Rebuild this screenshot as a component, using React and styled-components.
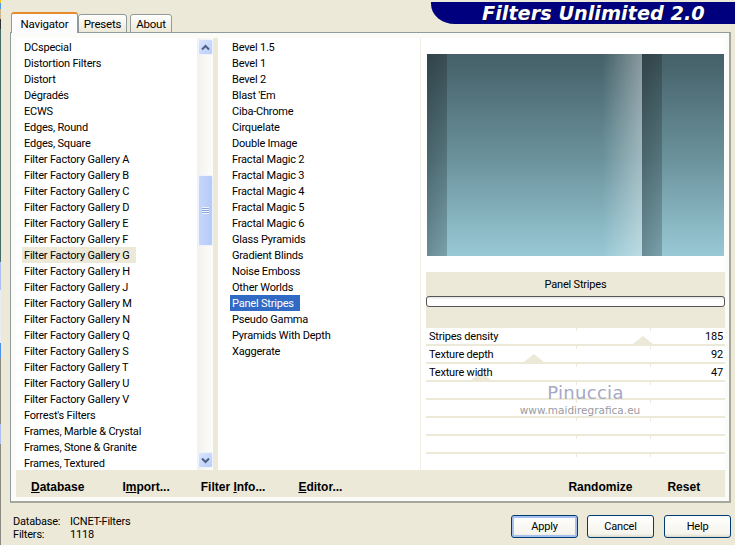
import React from "react";
import styled, { createGlobalStyle } from "styled-components";

const GlobalStyle = createGlobalStyle`
  html, body {
    margin: 0;
    padding: 0;
    background: #ece9d8;
  }
  body {
    font-family: Roboto, "Liberation Sans", sans-serif;
    font-size: 11px;
    letter-spacing: -0.2px;
    color: #000;
  }
`;

const filters = [
  "DCspecial", "Distortion Filters", "Distort", "Dégradés", "ECWS", "Edges, Round", "Edges, Square",
  "Filter Factory Gallery A", "Filter Factory Gallery B", "Filter Factory Gallery C", "Filter Factory Gallery D",
  "Filter Factory Gallery E", "Filter Factory Gallery F", "Filter Factory Gallery G", "Filter Factory Gallery H",
  "Filter Factory Gallery J", "Filter Factory Gallery M", "Filter Factory Gallery N", "Filter Factory Gallery Q",
  "Filter Factory Gallery S", "Filter Factory Gallery T", "Filter Factory Gallery U", "Filter Factory Gallery V",
  "Forrest's Filters", "Frames, Marble & Crystal", "Frames, Stone & Granite", "Frames, Textured",
];

const effects = [
  "Bevel 1.5", "Bevel 1", "Bevel 2", "Blast 'Em", "Ciba-Chrome", "Cirquelate", "Double Image",
  "Fractal Magic 2", "Fractal Magic 3", "Fractal Magic 4", "Fractal Magic 5", "Fractal Magic 6",
  "Glass Pyramids", "Gradient Blinds", "Noise Emboss", "Other Worlds", "Panel Stripes", "Pseudo Gamma",
  "Pyramids With Depth", "Xaggerate",
];

const sliders = [
  { label: "Stripes density", value: 185 },
  { label: "Texture depth", value: 92 },
  { label: "Texture width", value: 47 },
  {}, {}, {}, {}, {},
];

const Window = styled.div`
  width: 735px;
  height: 545px;
  overflow: hidden;
  display: flex;
  flex-direction: column;
  background: #ece9d8;
  box-sizing: border-box;
  border-left: 1px solid;
  border-image: linear-gradient(
      #f5c518 0 4px,
      #4a9be8 4px 10px,
      #c9b48c 10px 20px,
      #333 20px 30px,
      #46696a 30px 262px,
      #a9c0f0 262px 290px,
      #e8ecf6 290px 343px,
      #4a90e8 343px 358px,
      #8a8a80 358px 423px,
      #a9c0f0 423px 443px,
      #8a8a80 443px
    ) 1;
`;

const Header = styled.header`
  height: 32px;
  display: flex;
  padding-left: 10px;
`;

const Tabs = styled.nav`
  display: flex;
  align-items: flex-end;
  position: relative;
  top: 1px;
`;

const Tab = styled.div`
  box-sizing: border-box;
  width: ${(p) => p.$w}px;
  height: ${(p) => (p.$active ? 21 : 19)}px;
  margin-right: ${(p) => p.$gap || 0}px;
  display: flex;
  align-items: center;
  justify-content: center;
  font-size: 11.5px;
  border: 1px solid #919b9c;
  border-bottom: ${(p) => (p.$active ? "none" : "1px solid #919b9c")};
  border-top: ${(p) => (p.$active ? "2px solid #e68b2c" : "1px solid #919b9c")};
  border-radius: 3px 3px 0 0;
  background: ${(p) => (p.$active ? "#fcfcfe" : "linear-gradient(#fff, #ece9d8)")};
  z-index: ${(p) => (p.$active ? 1 : 0)};
`;

const Banner = styled.div`
  margin: 2px 0 0 auto;
  width: 304px;
  height: 22px;
  background: #00007f;
  border-bottom-left-radius: 24px 20px;
  box-sizing: border-box;
  padding-left: 51px;
  display: flex;
  align-items: center;
  color: #fff;
  font-family: "DejaVu Sans", sans-serif;
  font-weight: 700;
  font-style: italic;
  font-size: 19.3px;
  letter-spacing: 0;
  white-space: nowrap;
  text-shadow: 1px 1px 0 #000040;
`;

const Panel = styled.main`
  box-sizing: border-box;
  margin-left: 9px;
  width: 721px;
  height: 471px;
  padding: 5px 4px 4px 5px;
  border: 1px solid #919b9c;
  border-right: 2px solid #a5a89a;
  border-bottom: 2px solid #a5a89a;
  background: #fbfbf7;
  display: flex;
  flex-direction: column;
`;

const Columns = styled.div`
  height: 432px;
  display: flex;
`;

const ListPane = styled.div`
  width: ${(p) => p.$w}px;
  height: 432px;
  overflow: hidden;
  box-sizing: border-box;
  padding: 1px 0 0 ${(p) => p.$indent}px;
  background: #fff;
  flex: none;
`;

const Item = styled.div`
  height: 16px;
  line-height: 16px;
  white-space: nowrap;
`;

const ItemLabel = styled.span`
  display: inline-block;
  height: 16px;
  line-height: 18px;
  padding: 0 6px 0 2px;
  color: ${(p) => (p.$selected ? "#fff" : "#000")};
  background: ${(p) => (p.$selected ? "#316ac5" : p.$current ? "#ece9d8" : "transparent")};
`;

const Scrollbar = styled.div`
  width: 16px;
  height: 432px;
  flex: none;
  box-sizing: border-box;
  padding: 1px;
  background: linear-gradient(90deg, #f3f1ec, #fdfdfa);
  display: flex;
  flex-direction: column;
  align-items: center;
`;

const ScrollButton = styled.div`
  width: 15px;
  height: 16px;
  flex: none;
  border-radius: 2px;
  border: 1px solid #eef4fe;
  box-sizing: border-box;
  background: linear-gradient(135deg, #dbe6fd, #b9cdf9);
  display: flex;
  align-items: center;
  justify-content: center;
`;

const ScrollThumb = styled.div`
  width: 15px;
  height: 71px;
  flex: none;
  margin: 120px 0 206px;
  box-sizing: border-box;
  border: 1px solid #eef4fe;
  border-radius: 2px;
  background: linear-gradient(90deg, #c6d6fb, #b6caf8);
  display: flex;
  align-items: center;
  justify-content: center;
`;

const Grip = styled.div`
  width: 7px;
  height: 7px;
  background: repeating-linear-gradient(#eef4fe 0 1px, #8ea6d8 1px 2px);
`;

const Gutter = styled.div`
  width: 5px;
  background: #ece9d8;
  flex: none;
`;

const Settings = styled.section`
  width: 305px;
  flex: none;
  display: flex;
  flex-direction: column;
  box-sizing: border-box;
  padding-left: 5px;
  background: #fff;
  border-left: 1px solid #f1efe4;
  position: relative;
`;

const PreviewArea = styled.div`
  height: 234px;
  box-sizing: border-box;
  padding: 16px 1px;
`;

const Preview = styled.div`
  height: 202px;
  background:
    linear-gradient(90deg, rgba(0, 0, 0, 0.3), rgba(0, 0, 0, 0.2)) 215px 0 / 20px 100% no-repeat,
    linear-gradient(90deg, rgba(255, 255, 255, 0), rgba(255, 255, 255, 0.36)) 175px 0 / 40px 100% no-repeat,
    linear-gradient(90deg, rgba(0, 0, 0, 0.3), rgba(0, 0, 0, 0.2)) 0 0 / 20px 100% no-repeat,
    linear-gradient(#445f67, #6b929c 52%, #98c9d5);
`;

const InfoBlock = styled.div`
  height: 56px;
  background: #ece9d8;
  box-sizing: border-box;
  padding-top: 3px;
`;

const EffectName = styled.div`
  height: 21px;
  line-height: 19px;
  text-align: center;
`;

const Progress = styled.div`
  height: 11px;
  box-sizing: border-box;
  border: 1px solid #555;
  border-radius: 3px;
  background: linear-gradient(#e4e4e4, #fff 30%);
`;

const SliderList = styled.div`
  display: flex;
  flex-direction: column;
`;

const SliderRow = styled.div`
  height: 16px;
  margin-bottom: 2px;
  position: relative;
  background: #fff;
  display: flex;
  justify-content: space-between;
  align-items: center;
  padding: 0 2px 0 3px;
  &::after {
    content: "";
    position: absolute;
    left: 0;
    right: 0;
    top: 16px;
    height: 2px;
    background: #ece9d8;
  }
  &:last-child {
    margin-bottom: 0;
    &::after { display: none; }
  }
`;

const SliderText = styled.span`
  position: relative;
`;

const Tick = styled.i`
  position: absolute;
  top: 0;
  left: ${(p) => p.$at}px;
  width: 1px;
  height: 3px;
  background: #ece9d8;
`;

const Thumb = styled.i`
  position: absolute;
  bottom: 0;
  width: 20px;
  height: 8px;
  margin-left: -10px;
  background: #ece9d8;
  clip-path: polygon(50% 0, 100% 100%, 0 100%);
`;

const Watermark = styled.div`
  position: absolute;
  left: 94px;
  top: 345px;
  width: 130px;
  letter-spacing: 0;
  text-align: center;
  pointer-events: none;
`;

const WatermarkName = styled.div`
  margin-left: 11px;
  font-family: "DejaVu Sans", sans-serif;
  font-size: 18px;
  line-height: 20px;
  color: #a6a8c6;
  letter-spacing: 0.3px;
`;

const WatermarkUrl = styled.div`
  font-family: "DejaVu Sans", sans-serif;
  font-size: 10.5px;
  line-height: 15px;
  color: #9a9aa2;
  white-space: nowrap;
`;

const CommandBar = styled.div`
  height: 28px;
  box-sizing: border-box;
  padding: 7px 0 0 15px;
  background: #ece9d8;
  display: flex;
  align-items: center;
  font-family: "Liberation Sans", sans-serif;
  font-weight: 700;
  font-size: 12px;
  letter-spacing: 0;
`;

const Command = styled.span`
  margin-left: ${(p) => p.$gap || 0}px;
  white-space: nowrap;
`;

const Footer = styled.footer`
  flex: 1;
  display: flex;
  justify-content: space-between;
  padding: 12px 4px 0 12px;
`;

const Status = styled.dl`
  margin: 0;
  display: grid;
  grid-template-columns: 57px auto;
  grid-auto-rows: 13px;
  line-height: 13px;
  align-self: flex-start;
  dd, dt { margin: 0; }
`;

const Buttons = styled.div`
  display: flex;
  height: 23px;
`;

const Button = styled.button`
  width: 67px;
  height: 23px;
  padding: 0;
  margin-left: ${(p) => p.$gap || 0}px;
  font: inherit;
  letter-spacing: inherit;
  color: #000;
  border: 1px solid #003c74;
  border-radius: 3px;
  background: linear-gradient(#fff, #f5f4ec 85%, #dcd8c8);
  box-shadow: ${(p) => (p.$focus ? "inset 0 0 0 2px #a8c0ee" : "none")};
`;

function Chevron({ down }) {
  return (
    <svg width="9" height="7" viewBox="0 0 9 7">
      <path
        d={down ? "M1 1.5 L4.5 5 L8 1.5" : "M1 5.5 L4.5 2 L8 5.5"}
        fill="none"
        stroke="#4d6185"
        strokeWidth="2"
      />
    </svg>
  );
}

export default function App() {
  return (
    <>
      <GlobalStyle />
      <Window>
        <Header>
          <Tabs>
            <Tab $w={67} $active>Navigator</Tab>
            <Tab $w={49} $gap={3}>Presets</Tab>
            <Tab $w={42}>About</Tab>
          </Tabs>
          <Banner>Filters Unlimited 2.0</Banner>
        </Header>
        <Panel>
          <Columns>
            <ListPane $w={181} $indent={6}>
              {filters.map((name) => (
                <Item key={name}>
                  <ItemLabel $current={name === "Filter Factory Gallery G"}>{name}</ItemLabel>
                </Item>
              ))}
            </ListPane>
            <Scrollbar>
              <ScrollButton><Chevron /></ScrollButton>
              <ScrollThumb><Grip /></ScrollThumb>
              <ScrollButton><Chevron down /></ScrollButton>
            </Scrollbar>
            <Gutter />
            <ListPane $w={202} $indent={12}>
              {effects.map((name) => (
                <Item key={name}>
                  <ItemLabel $selected={name === "Panel Stripes"}>{name}</ItemLabel>
                </Item>
              ))}
            </ListPane>
            <Settings>
              <PreviewArea><Preview /></PreviewArea>
              <InfoBlock>
                <EffectName>Panel Stripes</EffectName>
                <Progress />
              </InfoBlock>
              <SliderList>
                {sliders.map((s, i) => (
                  <SliderRow key={i}>
                    <Tick $at={150} />
                    <Tick $at={224} />
                    {s.label && <Thumb style={{ left: `${(s.value / 255) * 100}%` }} />}
                    <SliderText>{s.label}</SliderText>
                    <SliderText>{s.value}</SliderText>
                  </SliderRow>
                ))}
              </SliderList>
              <Watermark>
                <WatermarkName>Pinuccia</WatermarkName>
                <WatermarkUrl>www.maidiregrafica.eu</WatermarkUrl>
              </Watermark>
            </Settings>
          </Columns>
          <CommandBar>
            <Command><u>D</u>atabase</Command>
            <Command $gap={38}>I<u>m</u>port...</Command>
            <Command $gap={31}>Filter <u>I</u>nfo...</Command>
            <Command $gap={33}><u>E</u>ditor...</Command>
            <Command $gap={226}>Randomize</Command>
            <Command $gap={35}>Reset</Command>
          </CommandBar>
        </Panel>
        <Footer>
          <Status>
            <dt>Database:</dt><dd>ICNET-Filters</dd>
            <dt>Filters:</dt><dd>1118</dd>
          </Status>
          <Buttons>
            <Button $focus>Apply</Button>
            <Button $gap={9}>Cancel</Button>
            <Button $gap={10}>Help</Button>
          </Buttons>
        </Footer>
      </Window>
    </>
  );
}
